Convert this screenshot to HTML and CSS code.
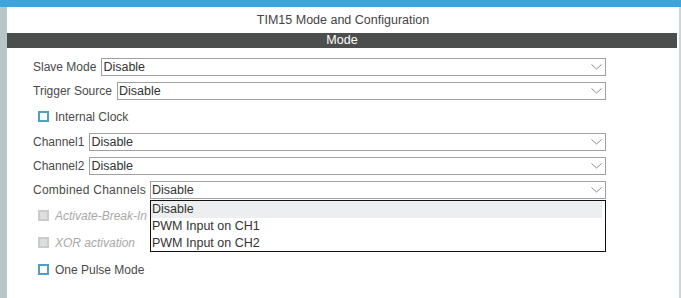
FILE: index.html
```html
<!DOCTYPE html>
<html lang="en">
<head>
    <meta charset="UTF-8">
    <title>TIM15 Mode and Configuration</title>
    <link rel="stylesheet" href="styles.css">
</head>
<body>
<div class="topbar"></div>
<div class="main">
    <div class="side"></div>
    <div class="panel">
        <div class="title">TIM15 Mode and Configuration</div>
        <div class="bar">Mode</div>
        <div class="form">
            <div class="row">
                <span class="label">Slave Mode</span>
                <div class="select">Disable<svg class="arrow" width="11" height="6" viewBox="0 0 11 6"><polyline points="0.5,0.5 5.5,5 10.5,0.5"/></svg></div>
            </div>
            <div class="row">
                <span class="label">Trigger Source</span>
                <div class="select">Disable<svg class="arrow" width="11" height="6" viewBox="0 0 11 6"><polyline points="0.5,0.5 5.5,5 10.5,0.5"/></svg></div>
            </div>
            <div class="check">
                <span class="box"></span>
                <span class="label">Internal Clock</span>
            </div>
            <div class="row">
                <span class="label">Channel1</span>
                <div class="select">Disable<svg class="arrow" width="11" height="6" viewBox="0 0 11 6"><polyline points="0.5,0.5 5.5,5 10.5,0.5"/></svg></div>
            </div>
            <div class="row">
                <span class="label">Channel2</span>
                <div class="select">Disable<svg class="arrow" width="11" height="6" viewBox="0 0 11 6"><polyline points="0.5,0.5 5.5,5 10.5,0.5"/></svg></div>
            </div>
            <div class="row">
                <span class="label wide">Combined Channels</span>
                <div class="select open">Disable<svg class="arrow" width="11" height="6" viewBox="0 0 11 6"><polyline points="0.5,0.5 5.5,5 10.5,0.5"/></svg>
                    <ul class="list">
                        <li class="hover">Disable</li>
                        <li>PWM Input on CH1</li>
                        <li>PWM Input on CH2</li>
                    </ul>
                </div>
            </div>
            <div class="check disabled">
                <span class="box"></span>
                <span class="label clip">Activate-Break-Input</span>
            </div>
            <div class="check disabled">
                <span class="box"></span>
                <span class="label">XOR activation</span>
            </div>
            <div class="check">
                <span class="box"></span>
                <span class="label">One Pulse Mode</span>
            </div>
        </div>
    </div>
</div>
</body>
</html>
```

FILE: styles.css
```css
*{
    margin: 0;
    padding: 0;
    box-sizing: border-box;
}
ul{
    list-style: none;
}
html,body{
    width: 681px;
    height: 298px;
    overflow: hidden;
    background: #fff;
    font-family: "Liberation Sans", Arial, sans-serif;
    font-size: 12px;
    color: #4a4a4a;
}
.topbar{
    height: 7px;
    background: #3ca6da;
}
.main{
    display: flex;
    height: 291px;
}
.side{
    width: 7px;
    background: #b8c5cb;
}
.panel{
    flex: 1;
    border-right: 2px solid #cfd4d6;
}
.title{
    height: 26px;
    line-height: 26px;
    text-align: center;
    font-size: 12.5px;
    color: #444;
}
.bar{
    height: 15px;
    line-height: 15px;
    margin-right: 2px;
    background: #4c4e4e;
    color: #fff;
    text-align: center;
    font-size: 12.5px;
}
.form{
    padding: 7px 73px 0 26px;
}
.row{
    display: flex;
    align-items: center;
    height: 24px;
}
.label{
    white-space: nowrap;
    padding-right: 5px;
}
.label.wide{
    letter-spacing: 0.25px;
    padding-right: 4px;
}
.label.clip{
    max-width: 92px;
    overflow: hidden;
    padding-right: 0;
}
.select{
    flex: 1;
    position: relative;
    height: 18px;
    line-height: 16px;
    border: 1px solid #a0a0a0;
    padding-left: 1px;
    color: #333;
    font-size: 12.5px;
}
.arrow{
    position: absolute;
    right: 3px;
    top: 5px;
    fill: none;
    stroke: #8c8c8c;
    stroke-width: 1;
}
.list{
    position: absolute;
    left: -1px;
    right: -1px;
    top: 18px;
    height: 52px;
    border: 1px solid #111;
    background: #fff;
    padding-right: 3px;
    z-index: 2;
}
.list li{
    height: 17px;
    line-height: 16px;
    padding-left: 1px;
    color: #333;
}
.list li.hover{
    background: #eceeef;
}
.check{
    display: flex;
    align-items: center;
    height: 27px;
    padding-left: 5px;
}
.box{
    width: 11px;
    height: 11px;
    border: 2px solid #4da2c3;
    background: #fff;
    margin-right: 6px;
}
.check.disabled .box{
    border-color: #c9cbcc;
    background: #dcdedf;
}
.check.disabled .label{
    font-style: italic;
    color: #a8a8a8;
}
```
